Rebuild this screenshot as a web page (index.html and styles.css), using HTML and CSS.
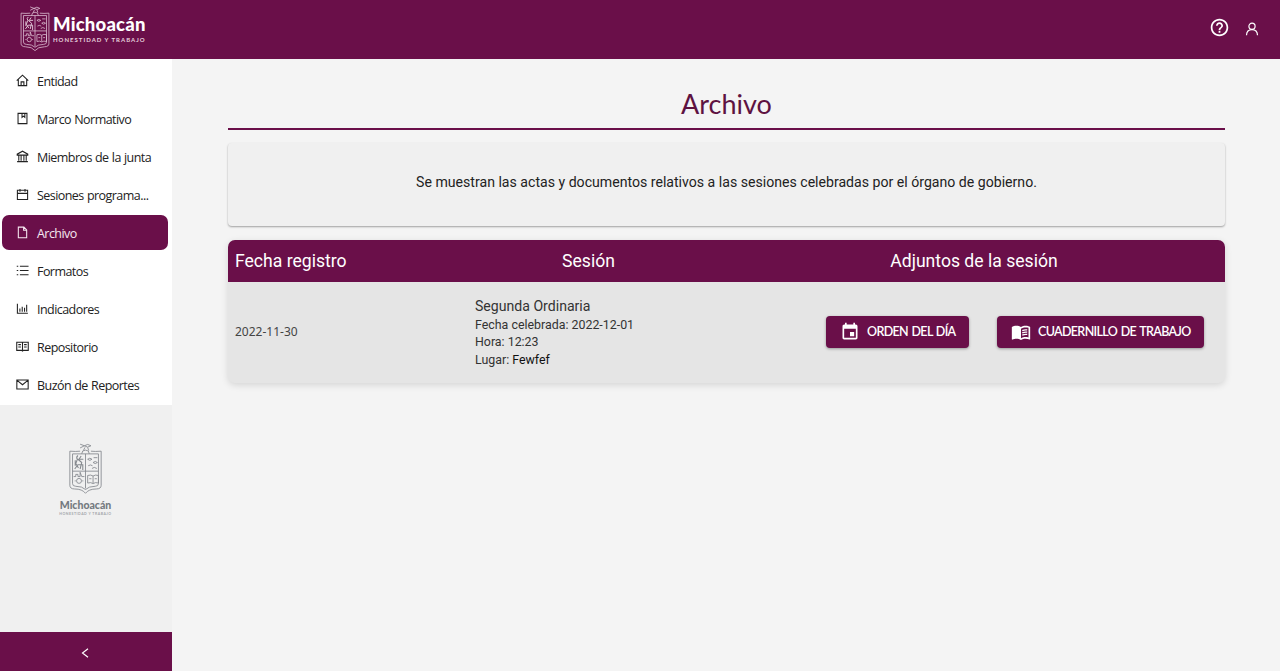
FILE: index.html
```html
<!DOCTYPE html>
<html lang="es">
<head>
<meta charset="utf-8">
<title>Archivo</title>
<link rel="stylesheet" href="styles.css">
</head>
<body>
<svg class="defs" width="0" height="0">
  <symbol id="crest" viewBox="0 0 32 50">
    <g fill="none" stroke="currentColor" stroke-width=".8">
      <path d="M1.500 8.500Q7 9 11 8.500M21 8.500Q25 9 30.500 8.500V40Q30.500 43.500 26 43.500Q19 43.500 16 47.500Q13 43.500 6 43.500Q1.500 43.500 1.500 40V8.500"/>
      <path d="M4 11H28V38.500Q28 41 25 41Q19 41 16 44Q13 41 7 41Q4 41 4 38.500ZM16 11V43M4 27H28"/>
      <path d="M11 2L15 3.500Q18 1 21 3.500Q18 6 15 3.500L11 5.500M15.500 5L14 8M18 5L19 8M12.500 11Q12.500 7.500 16 7.500Q19.500 7.500 19.500 11"/>
      <path d="M9 12.500Q7 14 8.500 16L7 20L9.500 24M9 16L12.500 19L11 25M12 13L10 16L14 16M6 25L9 21H13.500V26M6.500 17V22" stroke-width="1"/>
      <path d="M18 16Q20 14 22 16Q20 18 18 16ZM23 19Q25 17 27 19Q25 21 23 19ZM18.500 22Q20.500 20.500 22.500 22M23.500 14.500H27M22 24.500Q24 22.500 26.500 24.500"/>
      <circle cx="10" cy="36" r="2.300"/><path d="M5 32H7V30H9V32H11V28L12.500 32H15M6 36H7M13 36H14"/>
      <path d="M18 31Q21 30 23 31.500Q25 30 28 31V38Q25 37 23 38.500Q21 37 18 38ZM23 31.500V38M19.500 34H21.500M24.500 34H26.500"/>
    </g>
  </symbol>
</svg>
<header class="topbar">
  <div class="brand">
    <svg class="brand-crest"><use href="#crest"/></svg>
    <div class="brand-text"><div class="brand-name">Michoacán</div><div class="brand-motto">HONESTIDAD Y TRABAJO</div></div>
  </div>
  <div class="actions">
    <svg class="help" viewBox="0 0 24 24"><path fill="currentColor" d="M11 18h2v-2h-2v2zm1-16C6.480 2 2 6.480 2 12s4.480 10 10 10 10-4.480 10-10S17.520 2 12 2zm0 18c-4.410 0-8-3.590-8-8s3.590-8 8-8 8 3.590 8 8-3.590 8-8 8zm0-14c-2.210 0-4 1.790-4 4h2c0-1.100.9-2 2-2s2 .9 2 2c0 2-3 1.750-3 5h2c0-2.250 3-2.500 3-5 0-2.210-1.790-4-4-4z"/></svg>
    <svg class="user" viewBox="0 0 14 14"><g fill="none" stroke="currentColor" stroke-width="1.200"><circle cx="7" cy="4.300" r="3.100"/><path d="M1.500 13.200Q1.700 7.600 7 7.600T12.500 13.200"/></g></svg>
  </div>
</header>
<div class="body">
  <aside class="sidebar">
    <nav class="menu">
      <a class="item"><svg class="icon" viewBox="0 0 14 14"><path d="M.8 7.200L7 1.300l6.200 5.900M2.500 6v6.500h9V6M5.500 12.500V8.500h3v4"/></svg><span>Entidad</span></a>
      <a class="item"><svg class="icon" viewBox="0 0 14 14"><path d="M2.200 1.500h9.600v11H2.200zM6.500 1.500v4.200L8 4.500l1.500 1.200V1.500"/></svg><span>Marco Normativo</span></a>
      <a class="item"><svg class="icon" viewBox="0 0 14 14"><path d="M1.300 5.500V4.500L7 1.300l5.700 3.200v1zM3 5.500v6M5.500 5.500v6M8.500 5.500v6M11 5.500v6M1.200 12.500h11.600"/></svg><span>Miembros de la junta</span></a>
      <a class="item"><svg class="icon" viewBox="0 0 14 14"><path d="M1.500 2.500h11v9.800h-11zM1.500 5.800h11M4.300 1v3M9.700 1v3"/></svg><span>Sesiones programa...</span></a>
      <a class="item selected"><svg class="icon" viewBox="0 0 14 14"><path d="M2.500 1.200h6l3 3v8.500h-9zM8.200 1.200v3.300h3.300"/></svg><span>Archivo</span></a>
      <a class="item"><svg class="icon" viewBox="0 0 14 14"><path d="M4.200 2.500h9.300M4.200 7h9.300M4.200 11.500h9.300M.8 2.500h1.600M.8 7h1.600M.8 11.500h1.600"/></svg><span>Formatos</span></a>
      <a class="item"><svg class="icon" viewBox="0 0 14 14"><path d="M1.500 1.800v10.400h11.300M4.200 10.500V7M6.700 10.500V5M9.200 10.500V6.300M11.500 10.500V3"/></svg><span>Indicadores</span></a>
      <a class="item"><svg class="icon" viewBox="0 0 14 14"><path d="M.8 2.500h12.400v8.700H8L7 12l-1-.8H.8zM7 2.500v9M2.500 5H5.300M2.500 7.500H5.300M8.700 5h2.800M8.700 7.500h2.800"/></svg><span>Repositorio</span></a>
      <a class="item"><svg class="icon" viewBox="0 0 14 14"><path d="M.9 2.200h12.200v9.600H.9zM1.200 2.600L7 7.300l5.800-4.700"/></svg><span>Buzón de Reportes</span></a>
    </nav>
    <div class="side-logo">
      <svg class="side-crest"><use href="#crest"/></svg>
      <div class="side-name">Michoacán</div>
      <div class="side-motto">HONESTIDAD Y TRABAJO</div>
    </div>
    <div class="collapse"><svg viewBox="0 0 8 10"><path d="M7 .8L1.500 5L7 9.200" fill="none" stroke="currentColor" stroke-width="1.200"/></svg></div>
  </aside>
  <main class="content">
    <h1 class="title">Archivo</h1>
    <section class="notice">Se muestran las actas y documentos relativos a las sesiones celebradas por el órgano de gobierno.</section>
    <section class="table">
      <div class="row head"><div>Fecha registro</div><div class="center">Sesión</div><div class="center last">Adjuntos de la sesión</div></div>
      <div class="row data">
        <div class="date">2022-11-30</div>
        <div class="session"><div class="session-name">Segunda Ordinaria</div><div>Fecha celebrada: 2022-12-01</div><div>Hora: 12:23</div><div>Lugar: <span class="place">Fewfef</span></div></div>
        <div class="files">
          <button class="btn agenda"><svg viewBox="0 0 24 24"><path fill="currentColor" d="M17 12h-5v5h5v-5zM16 1v2H8V1H6v2H5c-1.110 0-1.990.9-1.990 2L3 19c0 1.100.89 2 2 2h14c1.100 0 2-.9 2-2V5c0-1.100-.9-2-2-2h-1V1h-2zm3 18H5V8h14v11z"/></svg><span>ORDEN DEL DÍA</span></button>
          <button class="btn book"><svg viewBox="0 0 24 24"><path fill="currentColor" d="M21 5c-1.110-.35-2.330-.5-3.500-.5-1.950 0-4.050.4-5.500 1.500-1.450-1.100-3.550-1.500-5.500-1.500S2.450 4.900 1 6v14.650c0 .25.25.5.5.5.1 0 .15-.05.25-.05C3.100 20.450 5.050 20 6.500 20c1.950 0 4.050.4 5.500 1.500 1.350-.85 3.800-1.500 5.500-1.500 1.650 0 3.350.3 4.750 1.050.1.050.15.050.25.050.25 0 .5-.25.5-.5V6c-.6-.45-1.250-.75-2-1zm0 13.500c-1.100-.35-2.300-.5-3.500-.5-1.700 0-4.150.65-5.500 1.500V8c1.350-.85 3.800-1.500 5.500-1.500 1.200 0 2.400.15 3.500.5v11.500z"/><path d="M13.500 10.300q3-1.300 6-.8M13.500 13q3-1.300 6-.8M13.500 15.700q3-1.300 6-.8" fill="none" stroke="currentColor" stroke-width="1.500"/></svg><span>CUADERNILLO DE TRABAJO</span></button>
        </div>
      </div>
    </section>
  </main>
</div>
</body>
</html>
```
FILE: styles.css
```css
* { box-sizing: border-box; }
body { margin: 0; height: 671px; display: flex; flex-direction: column; background: #f4f4f4; font-family: Roboto, sans-serif; overflow: hidden; }
.defs { position: absolute; }
.topbar { height: 59px; flex: none; background: #6a0f49; color: #fff; display: flex; justify-content: space-between; align-items: flex-start; padding: 5px 21px 0 19px; }
.brand { display: flex; gap: 2px; }
.brand-crest { width: 32px; height: 48px; color: #e0c4d6; }
.brand-text { padding-top: 7px; white-space: nowrap; }
.brand-name { font: 900 18.500px/24px Lato, sans-serif; letter-spacing: .2px; }
.brand-motto { font: 700 6px/8px Lato, sans-serif; letter-spacing: 1px; color: #e6cfdd; }
.actions { display: flex; gap: 15px; padding-top: 12px; }
.help { width: 21px; height: 21px; }
.user { width: 14px; height: 14px; margin-top: 5px; }
.body { flex: 1; display: flex; min-height: 0; }
.sidebar { width: 172px; flex: none; display: flex; flex-direction: column; background: #f0f0f0; }
.menu { height: 346px; flex: none; padding: 4px 4px 0 2px; background: #fff; display: flex; flex-direction: column; gap: 3px; }
.item { height: 35px; flex: none; display: flex; align-items: center; gap: 8px; padding-left: 14px; border-radius: 7px; font: 400 12.500px/20px "Open Sans", sans-serif; letter-spacing: -.55px; word-spacing: .5px; color: #222; white-space: nowrap; }
.item span { padding-top: 2px; }
.selected { background: #6a0f49; color: #f6e8f0; }
.icon { width: 13px; height: 13px; fill: none; stroke: currentColor; stroke-width: 1.150; }
.side-logo { flex: 1; display: flex; flex-direction: column; align-items: center; padding: 37px 1px 0 0; color: #85898e; }
.side-crest { width: 35px; height: 54px; }
.side-name { font: 900 10.500px/14px Lato, sans-serif; margin-top: 2px; color: #747a80; }
.side-motto { font: 700 3.500px/4px Lato, sans-serif; letter-spacing: .5px; color: #a3a6aa; }
.collapse { height: 39px; flex: none; display: flex; align-items: center; justify-content: center; padding: 3px 2px 0 0; background: #6a0f49; color: #fff; }
.collapse svg { width: 8px; height: 10px; }
.content { flex: 1; padding: 28px 55px 0 56px; }
.title { margin: 0; height: 43px; border-bottom: 2px solid #6a0f49; text-align: center; color: #5e1241; font: 400 27px/34px Lato, sans-serif; }
.notice { margin-top: 13px; height: 83px; padding-bottom: 5px; border-radius: 4px; background: #f0f0f0; box-shadow: 0 1px 2px rgba(0,0,0,.35); display: flex; align-items: center; justify-content: center; font-size: 14.120px; color: #222; }
.table { margin-top: 14px; height: 143px; border-radius: 7px; overflow: hidden; background: #e5e5e5; box-shadow: 0 2px 7px rgba(0,0,0,.13); }
.row { display: grid; grid-template-columns: 240px 241px 516px; align-items: center; }
.head { height: 42px; background: #6a0f49; color: #fff; font-size: 17.600px; }
.head > div:first-child { padding-left: 7px; }
.center { text-align: center; }
.last { padding-left: 14px; }
.data { height: 100px; }
.date { padding-left: 7px; font: 400 12px/18px "Noto Sans", sans-serif; color: #444; }
.session { padding-left: 7px; font-size: 12.400px; line-height: 17.400px; color: #333; }
.session-name { font-size: 14.100px; line-height: 20px; }
.place { color: #111; }
.files { display: flex; justify-content: flex-end; gap: 28px; padding-right: 21px; }
.btn { height: 32px; border: 0; border-radius: 4px; background: #6a0f49; color: #fff; display: flex; align-items: center; gap: 7px; padding: 0 0 1px 14px; box-shadow: 0 1px 3px rgba(0,0,0,.35); font: 600 12.500px/20px Lato, sans-serif; letter-spacing: -.65px; word-spacing: 1px; white-space: nowrap; }
.btn svg { width: 20px; height: 20px; flex: none; }
.agenda { width: 143px; }
.book { width: 207px; }
```
